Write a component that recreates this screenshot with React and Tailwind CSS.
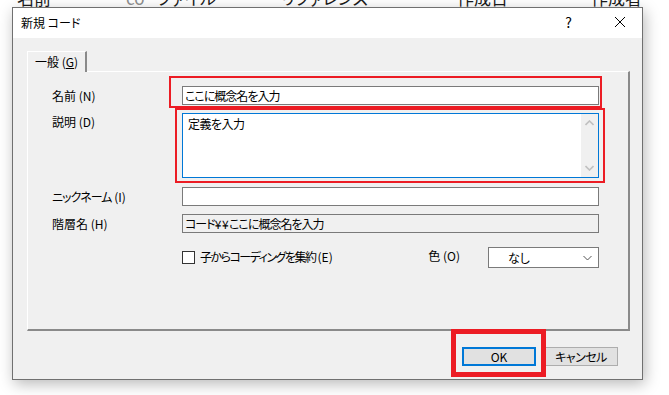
import React from "react";

const font = "font-['Noto_Sans_CJK_JP','Noto_Sans',sans-serif] [font-feature-settings:'palt']";

function Input({ children, disabled }) {
  return (
    <div
      className={`w-[417px] h-[19px] border border-[#7a7a7a] flex items-center pl-[2px] text-[12px] leading-none ${
        disabled ? "bg-[#f0f0f0]" : "bg-white"
      }`}
    >
      {children}
    </div>
  );
}

export default function App() {
  return (
    <div className={`relative w-[669px] h-[395px] bg-white overflow-hidden text-black ${font}`}>
      {/* background list header (clipped) */}
      <div className="h-[7px] overflow-hidden flex text-[17px] leading-[17px] text-[#1a1a1a]">
        <div className="flex mt-[-11px]">
          <span className="ml-[17px] w-[109px]">名前</span>
          <span className="w-[31px] text-[#8a8a8a]">co</span>
          <span className="w-[124px]">ファイル</span>
          <span className="w-[176px]">リファレンス</span>
          <span className="w-[134px]">作成日</span>
          <span>作成者</span>
        </div>
      </div>

      {/* dialog */}
      <div className="ml-[12px] w-[631px] h-[373px] border border-[#707070] bg-[#f0f0f0] flex flex-col shadow-[2px_4px_14px_rgba(0,0,0,0.28)]">
        {/* title bar */}
        <div className="h-[30px] bg-white flex items-center text-[12px] shrink-0">
          <span className="pl-[8px] mt-[-1px]">新規 コード</span>
          <span className="ml-auto mr-[42px] text-[14px] mt-[-2px]">?</span>
          <svg width="12" height="12" viewBox="0 0 12 12" className="mr-[16px] mt-[-2px]">
            <path d="M1 1 L11 11 M11 1 L1 11" stroke="#000" strokeWidth="1" />
          </svg>
        </div>

        {/* body */}
        <div className="flex-1 pl-[14px] pt-[13px] flex flex-col">
          {/* tab */}
          <div className="w-[60px] h-[21px] border-t border-l border-white border-r-2 border-r-[#8a8a8a] flex items-center justify-center text-[12px] leading-none -mb-px relative z-10 bg-[#f0f0f0]">
            <span>
              一般 (<span className="underline underline-offset-1">G</span>)
            </span>
          </div>
          {/* panel */}
          <div className="relative w-[603px] h-[260px] border-t border-l border-white border-r-2 border-b-2 border-r-[#8a8a8a] border-b-[#8a8a8a] flex flex-col pl-[24px] text-[12px] leading-none">
            {/* row 1 */}
            <div className="flex items-center mt-[14px]">
              <div className="w-[130px]">名前 (N)</div>
              <Input>
                <span className="tracking-[-1px]">ここに概念名を入力</span>
              </Input>
            </div>
            {/* row 2 */}
            <div className="flex mt-[8px]">
              <div className="w-[130px] pt-[3px]">説明 (D)</div>
              <div className="w-[417px] h-[65px] border border-[#0078d7] bg-white flex">
                <div className="flex-1 pl-[5px] pt-[4px] tracking-[-0.5px]">定義を入力</div>
                <div className="w-[17px] bg-[#f0f0f0] flex flex-col items-center justify-between py-[6px]">
                  <svg width="9" height="6" viewBox="0 0 9 6">
                    <path d="M0.5 5 L4.5 1 L8.5 5" stroke="#c0c0c0" strokeWidth="1.6" fill="none" />
                  </svg>
                  <svg width="9" height="6" viewBox="0 0 9 6">
                    <path d="M0.5 1 L4.5 5 L8.5 1" stroke="#c0c0c0" strokeWidth="1.6" fill="none" />
                  </svg>
                </div>
              </div>
            </div>
            {/* row 3 */}
            <div className="flex items-center mt-[9px]">
              <div className="w-[130px]">
                <span className="tracking-[-1px]">ニックネーム</span> (I)
              </div>
              <Input />
            </div>
            {/* row 4 */}
            <div className="flex items-center mt-[8px]">
              <div className="w-[130px]">階層名 (H)</div>
              <Input disabled>
                <span className="tracking-[-1px]">コード</span>
                <span className="tracking-[0.5px]">¥¥</span>
                <span className="tracking-[-1px]">ここに概念名を入力</span>
              </Input>
            </div>
            {/* row 5 */}
            <div className="flex items-center mt-[14px]">
              <div className="w-[130px]" />
              <div className="w-[417px] flex items-center">
                <div className="w-[13px] h-[13px] border border-[#333] bg-white" />
                <span className="ml-[5px] mt-[-2px]">
                  <span className="tracking-[-1.5px]">子からコーディングを集約</span>
                  <span className="ml-[2px]">(E)</span>
                </span>
                <span className="ml-auto mt-[-3px]">色 (O)</span>
                <div className="ml-[28px] w-[111px] h-[21px] border border-[#7a7a7a] bg-white flex items-center">
                  <span className="ml-[19px]">なし</span>
                  <svg width="9" height="6" viewBox="0 0 9 6" className="ml-auto mr-[6px]">
                    <path d="M0.5 1 L4.5 5 L8.5 1" stroke="#555" strokeWidth="1" fill="none" />
                  </svg>
                </div>
              </div>
            </div>

            {/* red annotation boxes */}
            <div className="absolute left-[141px] top-[4px] w-[433px] h-[32px] border-2 border-[#ec1c24] pointer-events-none" />
            <div className="absolute left-[147px] top-[36px] w-[430px] h-[75px] border-2 border-[#ec1c24] pointer-events-none" />
          </div>

          {/* buttons */}
          <div className="flex mt-[16px] ml-[435px] gap-[8px] text-[12px] leading-none">
            <div className="w-[74px] h-[19px] border-2 border-[#0078d7] bg-[#e1e1e1] flex items-center justify-center">
              OK
            </div>
            <div className="w-[74px] h-[19px] border border-[#adadad] bg-[#e1e1e1] flex items-center justify-center tracking-[-0.5px]">
              キャンセル
            </div>
          </div>
        </div>
      </div>

      {/* red box around OK */}
      <div className="absolute left-[451px] top-[329px] w-[95px] h-[48px] border-[5px] border-[#ec1c24] pointer-events-none" />
    </div>
  );
}
